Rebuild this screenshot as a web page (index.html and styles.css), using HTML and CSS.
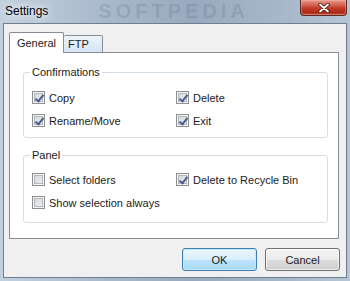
FILE: index.html
```html
<!DOCTYPE html>
<html lang="en">
<head>
  <meta charset="UTF-8" />
  <title>Settings</title>
  <link rel="stylesheet" href="styles.css">
</head>
<body>
  <div class="window">
    <div class="titlebar">
      <span class="title">Settings</span>
      <span class="watermark">SOFTPEDIA</span>
      <button class="close" type="button" aria-label="Close">
        <svg width="12" height="10" viewBox="0 0 12 10">
          <path d="M2 1.5 L10 8.5 M10 1.5 L2 8.5" stroke="#3b1a16" stroke-width="3.4" stroke-linecap="round"/>
          <path d="M2 1.5 L10 8.5 M10 1.5 L2 8.5" stroke="#fff" stroke-width="1.8" stroke-linecap="round"/>
        </svg>
      </button>
    </div>

    <div class="client">
      <div class="tab-strip">
        <span class="tab active">General</span>
        <span class="tab">FTP</span>
      </div>

      <div class="tab-page">
        <fieldset class="group">
          <legend>Confirmations</legend>
          <div class="rows">
            <label class="check"><span class="box on"></span>Copy</label>
            <label class="check"><span class="box on"></span>Delete</label>
            <label class="check"><span class="box on"></span>Rename/Move</label>
            <label class="check"><span class="box on"></span>Exit</label>
          </div>
        </fieldset>

        <fieldset class="group panel">
          <legend>Panel</legend>
          <div class="rows">
            <label class="check"><span class="box"></span>Select folders</label>
            <label class="check"><span class="box on"></span>Delete to Recycle Bin</label>
            <label class="check"><span class="box"></span>Show selection always</label>
          </div>
        </fieldset>
      </div>

      <div class="buttons">
        <button class="btn default" type="button">OK</button>
        <button class="btn" type="button">Cancel</button>
      </div>
    </div>
  </div>
</body>
</html>
```

FILE: styles.css
```css
* { box-sizing: border-box; margin: 0; padding: 0; }
body {
  width: 350px;
  height: 281px;
  overflow: hidden;
  font-family: "Liberation Sans", Arial, sans-serif;
  font-size: 11px;
  color: #1b1b1b;
}
.window {
  width: 350px;
  height: 281px;
  display: flex;
  flex-direction: column;
  padding: 0 3px 3px;
  background: linear-gradient(to right, #c2d0de 0%, #a8b9cb 30%, #98aabd 55%, #a6b7c9 80%, #b7c6d5 100%);
}
.titlebar {
  height: 23px;
  display: flex;
  align-items: flex-start;
}
.title {
  padding: 4px 0 0 2px;
  font-size: 12px;
  color: #000;
  text-shadow: 0 0 4px #e8eef4, 0 0 8px #e8eef4, 0 0 12px #e8eef4;
}
.watermark {
  margin-left: 50px;
  font-size: 20px;
  line-height: 23px;
  font-weight: bold;
  letter-spacing: 4px;
  color: rgba(85, 105, 130, 0.22);
}
.close {
  margin-left: auto;
  width: 47px;
  height: 16px;
  display: flex;
  justify-content: center;
  align-items: center;
  border: 1px solid #5b2a24;
  border-top: none;
  border-radius: 0 0 4px 4px;
  background: linear-gradient(#e59a8c 0%, #d4604f 35%, #c23a27 55%, #ad2a17 85%, #c85a40 100%);
  box-shadow: inset 0 0 0 1px rgba(255, 200, 190, 0.35);
}
.client {
  flex: 1;
  display: flex;
  flex-direction: column;
  padding: 8px 6px 6px 5px;
  background: #f0f0f0;
  border: 1px solid #6e7f92;
}
.tab-strip {
  height: 20px;
  display: flex;
  align-items: flex-end;
  position: relative;
  z-index: 1;
}
.tab {
  height: 17px;
  width: 39px;
  padding: 2px 0 0 4px;
  border: 1px solid #898c95;
  border-bottom: none;
  border-left: none;
  background: linear-gradient(#edf4fb, #d4e5f4);
  border-radius: 2px 2px 0 0;
}
.tab.active {
  height: 21px;
  width: 55px;
  margin-bottom: -1px;
  padding: 4px 0 0 0;
  text-align: center;
  border-left: 1px solid #898c95;
  background: #fff;
}
.tab-page {
  height: 187px;
  margin-right: 1px;
  padding: 0 10px 0 13px;
  border: 1px solid #898c95;
  background: #fff;
}
.group {
  margin-top: 13px;
  padding: 0 0 5px 8px;
  border: 1px solid #d5dee5;
  border-radius: 3px;
}
.group legend {
  margin-left: -2px;
  padding: 0 2px;
  line-height: 13px;
}
.group.panel {
  margin-top: 11px;
  padding-bottom: 8px;
}
.rows {
  display: grid;
  grid-template-columns: 144px 1fr;
  grid-auto-rows: 23px;
  padding-top: 7px;
}
.panel .rows { padding-top: 6px; }
.check {
  display: flex;
  align-items: center;
  gap: 4px;
}
.box {
  width: 13px;
  height: 13px;
  flex: none;
  border: 1px solid #8e8f8f;
  background: linear-gradient(135deg, #cfd2d6, #f4f4f4);
  box-shadow: inset 0 0 0 1px #f4f4f4, inset 0 0 0 2px #b4b8bd;
  position: relative;
}
.box.on::after {
  content: "";
  position: absolute;
  left: 4px;
  top: 1px;
  width: 3px;
  height: 7px;
  border: solid #4a5d92;
  border-width: 0 2px 2px 0;
  transform: rotate(38deg);
}
.buttons {
  margin-top: 9px;
  display: flex;
  justify-content: flex-end;
  gap: 8px;
}
.btn {
  width: 75px;
  height: 23px;
  font-family: inherit;
  font-size: 11px;
  color: #1b1b1b;
  border: 1px solid #707070;
  border-radius: 3px;
  background: linear-gradient(#f2f2f2 0%, #ebebeb 50%, #dddddd 50%, #cfcfcf 100%);
  box-shadow: inset 0 0 0 1px rgba(255, 255, 255, 0.7);
}
.btn.default {
  border-color: #3c7fb1;
  background: linear-gradient(#eaf6fd 0%, #d9f0fc 50%, #bee6fd 50%, #a7d9f5 100%);
  box-shadow: inset 0 0 0 1px #c8e8fa;
}
```
